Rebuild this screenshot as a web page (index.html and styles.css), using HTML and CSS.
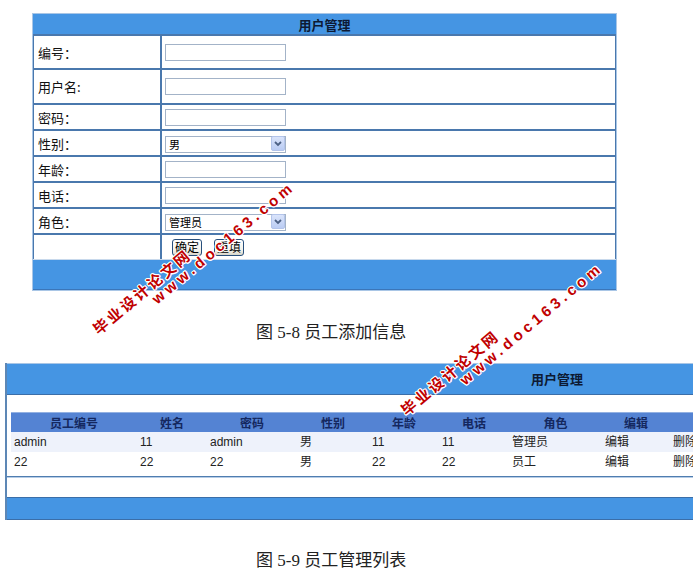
FILE: index.html
```html
<!DOCTYPE html>
<html lang="zh-CN">
<head>
<meta charset="utf-8">
<title>用户管理</title>
<link rel="stylesheet" href="styles.css">
</head>
<body>
<div class="page">
  <div class="form">
    <div class="form-head">用户管理</div>
    <div class="form-body">
      <div class="row r-tall1"><div class="lbl">编号：</div><div class="val"><input class="txt" type="text"></div></div>
      <div class="row r-tall2"><div class="lbl">用户名:</div><div class="val"><input class="txt" type="text"></div></div>
      <div class="row"><div class="lbl">密码：</div><div class="val"><input class="txt" type="text"></div></div>
      <div class="row"><div class="lbl">性别：</div><div class="val">
        <span class="sel"><select><option>男</option><option>女</option></select><svg class="sel-btn" width="14" height="15" viewBox="0 0 14 15"><defs><linearGradient id="g1" x1="0" y1="0" x2="0" y2="1"><stop offset="0" stop-color="#dbe5fb"/><stop offset="1" stop-color="#b9cbf3"/></linearGradient></defs><rect x="0.5" y="0.5" width="13" height="14" rx="1.5" fill="url(#g1)" stroke="#b3c4ea"/><path d="M4 6 L7 9 L10 6" fill="none" stroke="#4d6185" stroke-width="1.8"/></svg></span>
      </div></div>
      <div class="row"><div class="lbl">年龄：</div><div class="val"><input class="txt" type="text"></div></div>
      <div class="row"><div class="lbl">电话：</div><div class="val"><input class="txt" type="text"></div></div>
      <div class="row"><div class="lbl">角色：</div><div class="val">
        <span class="sel"><select><option>管理员</option><option>员工</option></select><svg class="sel-btn" width="14" height="15" viewBox="0 0 14 15"><defs><linearGradient id="g2" x1="0" y1="0" x2="0" y2="1"><stop offset="0" stop-color="#dbe5fb"/><stop offset="1" stop-color="#b9cbf3"/></linearGradient></defs><rect x="0.5" y="0.5" width="13" height="14" rx="1.5" fill="url(#g2)" stroke="#b3c4ea"/><path d="M4 6 L7 9 L10 6" fill="none" stroke="#4d6185" stroke-width="1.8"/></svg></span>
      </div></div>
      <div class="row last"><div class="lbl"></div><div class="val btns"><button class="btn" type="button">确定</button><button class="btn" type="button">重填</button></div></div>
    </div>
    <div class="form-foot"></div>
  </div>

  <div class="caption cap1">图 5-8 员工添加信息</div>

  <div class="list">
    <div class="list-head">用户管理</div>
    <div class="list-body">
      <table class="grid">
        <colgroup>
          <col class="c1"><col class="c2"><col class="c3"><col class="c4"><col class="c5"><col class="c6"><col class="c7"><col class="c8"><col class="c9">
        </colgroup>
        <thead>
          <tr><th>员工编号</th><th>姓名</th><th>密码</th><th>性别</th><th>年龄</th><th>电话</th><th>角色</th><th>编辑</th><th>删除</th></tr>
        </thead>
        <tbody>
          <tr class="alt"><td>admin</td><td>11</td><td>admin</td><td>男</td><td>11</td><td>11</td><td>管理员</td><td>编辑</td><td>删除</td></tr>
          <tr><td>22</td><td>22</td><td>22</td><td>男</td><td>22</td><td>22</td><td>员工</td><td>编辑</td><td>删除</td></tr>
        </tbody>
      </table>
    </div>
    <div class="list-space"></div>
    <div class="list-foot"></div>
  </div>

  <div class="caption cap2">图 5-9 员工管理列表</div>

  <div class="wm wm-cn wm1-cn">毕业设计论文网</div>
  <div class="wm wm-en wm1-en">www.doc163.com</div>
  <div class="wm wm-cn wm2-cn">毕业设计论文网</div>
  <div class="wm wm-en wm2-en">www.doc163.com</div>
</div>
</body>
</html>
```

FILE: styles.css
```css
html, body {
  margin: 0;
  padding: 0;
  overflow: hidden;
  background: #ffffff;
}
body {
  font-family: "Noto Sans CJK SC", "Liberation Sans", sans-serif;
  font-size: 12px;
  color: #111;
}
.page {
  position: relative;
  width: 693px;
  height: 584px;
}

/* ---------- top form ---------- */
.form {
  margin: 13px 0 0 32px;
  width: 585px;
  box-sizing: border-box;
  border: 1px solid #a9c6e6;
}
.form-head {
  box-sizing: border-box;
  padding-top: 1px;
  background: #4595e3;
  border-bottom: 2px solid #4a78ad;
  height: 22px;
  text-align: center;
  font-weight: bold;
  font-size: 13px;
  line-height: 20px;
  color: #0d1a33;
}
.form-body {
  border-left: 1px solid #4a78ad;
  border-right: 1px solid #4a78ad;
}
.row {
  display: flex;
  height: 24px;
  border-bottom: 2px solid #4a78ad;
}
.row.r-tall1 { height: 32px; }
.row.r-tall2 { height: 33px; }
.row.last { border-bottom: none; }
.lbl {
  flex: none;
  width: 122px;
  border-right: 2px solid #4a78ad;
  padding-left: 4px;
  display: flex;
  align-items: center;
  font-size: 13px;
  color: #111;
}
.val {
  flex: 1;
  display: flex;
  align-items: center;
  padding-left: 3px;
}
.txt {
  width: 121px;
  height: 17px;
  box-sizing: border-box;
  border: 1px solid #a3b3c8;
  margin: 0;
  padding: 0 2px;
  background: #fff;
}
.sel {
  position: relative;
  display: inline-block;
  width: 121px;
  height: 17px;
}
.sel select {
  -webkit-appearance: none;
  appearance: none;
  width: 121px;
  height: 17px;
  box-sizing: border-box;
  margin: 0;
  border: 1px solid #a3b3c8;
  border-radius: 0;
  background: #fff;
  padding: 0 0 0 3px;
  font-family: "Noto Sans CJK SC", "Liberation Sans", sans-serif;
  font-size: 11px;
  line-height: 15px;
  color: #000;
}
.sel-btn {
  position: absolute;
  right: 1px;
  top: 1px;
}
.btns { padding-left: 10px; }
.btn {
  height: 17px;
  margin: 0 12px 0 0;
  padding: 0 2px;
  box-sizing: border-box;
  border: 1px solid #284f7c;
  border-radius: 3px;
  background: linear-gradient(#ffffff, #f2f1ea 70%, #d8d5c8);
  font-family: "Noto Sans CJK SC", sans-serif;
  font-size: 12px;
  line-height: 14px;
  color: #000;
}
.form-foot {
  height: 29px;
  background: #4595e3;
  border-top: 1px solid #c8d9ec;
  border-bottom: 1px solid #3b76b9;
}

/* ---------- captions ---------- */
.caption {
  margin-left: 256px;
  font-family: "Liberation Serif", "Noto Sans CJK SC", serif;
  font-size: 17px;
  line-height: 20px;
  color: #222;
}
.cap1 { margin-top: 32px; }
.cap2 { margin-top: 31px; }

/* ---------- list ---------- */
.list {
  margin: 20px 0 0 5px;
  width: 1100px;
  border-left: 2px solid #5d87b5;
}
.list-head {
  height: 30px;
  background: #4595e3;
  border-top: 1px solid #a9c6e6;
  border-bottom: 1px solid #3b6ea8;
  text-align: center;
  font-weight: bold;
  font-size: 13px;
  line-height: 30px;
  color: #0d1a33;
}
.list-body {
  padding: 17px 0 4px 4px;
}
.grid {
  border-collapse: collapse;
  table-layout: fixed;
  width: 1090px;
}
.c1 { width: 126px; }
.c2 { width: 70px; }
.c3 { width: 90px; }
.c4 { width: 72px; }
.c5 { width: 70px; }
.c6 { width: 70px; }
.c7 { width: 93px; }
.c8 { width: 68px; }
.grid th {
  height: 19px;
  padding: 0;
  background: #5483d3;
  border-top: 1px solid #93b1e2;
  font-weight: bold;
  font-size: 12px;
  color: #14285f;
  text-align: center;
  line-height: 19px;
}
.grid td {
  height: 20px;
  padding: 0 0 0 3px;
  font-family: "Liberation Sans", "Noto Sans CJK SC", sans-serif;
  font-size: 12px;
  color: #222;
  line-height: 20px;
  white-space: nowrap;
  overflow: hidden;
}
.grid tr.alt td { background: #eef2fb; }
.list-space {
  height: 20px;
  border-top: 1px solid #4f7db0;
  box-shadow: inset 0 1px 0 #b7cde6;
}
.list-foot {
  height: 21px;
  background: #4595e3;
  border-top: 1px solid #3b6ea8;
  border-bottom: 1px solid #3b6ea8;
}

/* ---------- watermark ---------- */
.wm {
  position: absolute;
  white-space: nowrap;
  line-height: 18px;
  height: 18px;
  transform-origin: 0 50%;
  transform: rotate(-40deg);
  color: #c00000;
  font-weight: bold;
  text-shadow: 1px 0 0 #fff, -1px 0 0 #fff, 0 1px 0 #fff, 0 -1px 0 #fff, 1px 1px 0 #fff, -1px -1px 0 #fff, 1px -1px 0 #fff, -1px 1px 0 #fff;
}
.wm-cn {
  font-family: "Noto Sans CJK SC", sans-serif;
  font-size: 15px;
  letter-spacing: 2.5px;
}
.wm-en {
  font-family: "Liberation Sans", sans-serif;
  font-size: 15px;
  letter-spacing: 4px;
}
.wm1-cn { left: 95px; top: 309px; }
.wm1-en { left: 154px; top: 279px; }
.wm2-cn { left: 403px; top: 390px; }
.wm2-en { left: 462px; top: 360px; }
```
